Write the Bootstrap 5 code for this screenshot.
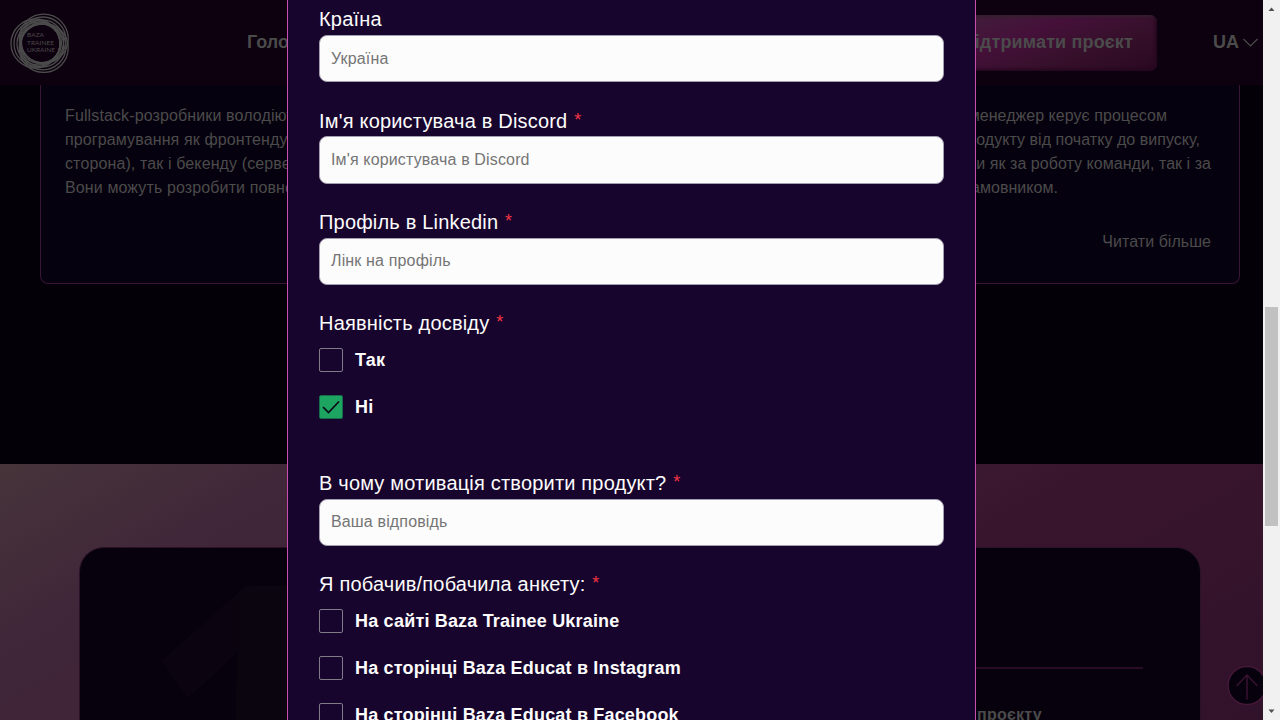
<!DOCTYPE html>
<html lang="uk">
<head>
<meta charset="utf-8">
<title>Baza Trainee Ukraine</title>
<link href="https://cdn.jsdelivr.net/npm/bootstrap@5.3.0/dist/css/bootstrap.min.css" rel="stylesheet">
<style>
body{font-family:"Liberation Sans",Arial,sans-serif;background:#030008;color:#4b4b4b}
.screen{height:720px;width:1280px}
.site{width:1263px}
.topbar{height:85px;background:#0d000f;font-size:18px;font-weight:700;padding:0 5px 0 10px}
.nav-first{margin-left:175px}
.donate{width:205px;height:56px;margin:0 56px 0 auto;border-radius:7px;padding-right:24px;font-size:18px;letter-spacing:.15px;background:linear-gradient(160deg,#40203a 0%,#45103a 35%,#36102b 65%,#2a0821 100%);box-shadow:inset -2px -2px 3px #250720,inset 0 2px 3px #35202f}
.roles{height:379px;padding:0 23px 0 40px}
.role{height:199px;width:389px;border:1px solid #3a1535;border-top:0;border-radius:0 0 8px 8px;background:#06010e;padding:19px 28px 0 24px;line-height:24px;white-space:nowrap;letter-spacing:.12px}
.ln1{margin-right:44px}.ln2{margin-right:11px}.ln3{margin-right:0}.ln4{margin-right:153px}
.role-end{letter-spacing:.04px}
.more{margin-top:30px}
.stages{height:256px;padding:84px 63px 0 80px;background:linear-gradient(150deg,#46343a 0%,#402639 20%,#402438 35%,#39152d 65%,#30122a 100%)}
.stage{height:172px;border-radius:24px 24px 0 0;background:#06010c;box-shadow:0 0 0 1px #2b1228}
.digit{font:700 370px/1 "Open Sans",sans-serif;width:300px;height:172px;transform:scaleY(1.11);transform-origin:0 39px;background:linear-gradient(90deg,#0b030f 0,#0b030f 145px,#0b050f 165px,#0b060f 100%);-webkit-background-clip:text;background-clip:text;color:transparent}
.digit span{display:block;margin-top:-26px;margin-left:59px}
.stage-side{width:300px;margin-right:57px}
.rule{height:2px;background:#280c24;margin-top:119px}
.stage-title{font-size:16px;font-weight:700;margin:34px 101px 0 0;text-align:right;line-height:24px;letter-spacing:.25px}
.to-top{left:1227px;top:665px;width:36px;height:40px}
.dialog-box{left:287px;top:-1px;width:689px;height:722px;border:1px solid #c94fae;background:#18052d;color:#fcfcfc;padding:7.3px 31px 0}
.q{font-size:20px;line-height:24px;height:27.7px;margin:0;white-space:pre;letter-spacing:.19px}
.q sup{color:#f13443;font-size:18px;line-height:0;vertical-align:2px;top:0;margin-left:1px}
.field{height:47.4px;border:1px solid #a59eb0;border-radius:8px;background:#fcfcfc;color:#212529;font-size:16px;letter-spacing:.15px;padding:0 11px;margin-bottom:26.2px;width:625px}
.field::placeholder{color:#757575}
.q-opts{margin-bottom:9.3px}
.q-gap{margin-top:52px}
.opt{height:24px;margin-bottom:22.8px;font-size:18px;font-weight:700;line-height:24px;gap:12px;letter-spacing:.18px}
.box{width:24px;height:24px;border:1px solid #817a89;border-radius:2px;flex:none}
.box.on{background:#1da461;border-color:#176b4d}
.sbar{width:17px;background:#f1f1f1}
.thumb{width:13px;height:219px;margin-top:307px;background:#c1c1c1}
.ar{left:0}
</style>
</head>
<body class="overflow-hidden">
<div class="screen d-flex position-relative overflow-hidden">
  <div class="site overflow-hidden">
    <header class="topbar d-flex align-items-center">
      <svg width="62" height="60" viewBox="0 0 62 60" fill="none" stroke="#4b4b4b" stroke-width="1.300">
        <circle cx="33.700" cy="25.700" r="24.500"/><circle cx="33" cy="27" r="23"/><circle cx="32.200" cy="28.300" r="21.500"/><circle cx="31.500" cy="29.600" r="20"/>
        <circle cx="25.500" cy="30.500" r="24.500"/><circle cx="27" cy="30.500" r="23"/><circle cx="28.500" cy="30.500" r="21.500"/><circle cx="30" cy="30.500" r="20"/>
        <circle cx="33.700" cy="34.900" r="24.500"/><circle cx="33" cy="33.800" r="23"/><circle cx="32.200" cy="32.600" r="21.500"/>
        <g fill="#4b4b4b" stroke="none" font-family="Lato,sans-serif" font-weight="400" font-size="6.500"><text x="17" y="24" textLength="17">BAZA</text><text x="17" y="31.700" textLength="27">TRAINEE</text><text x="17" y="39.300" textLength="28">UKRAINE</text></g>
      </svg>
      <span class="nav-first">Головна</span>
      <div class="donate d-flex align-items-center justify-content-end text-nowrap">Підтримати проєкт</div>
      <span>UA</span>
      <svg class="ms-1" width="15" height="9" viewBox="0 0 15 9" fill="none" stroke="#4b4b4b" stroke-width="1.200"><path d="M.5 1 7.500 8 14.500 1"/></svg>
    </header>
    <section class="roles d-flex justify-content-between">
      <div class="role">Fullstack-розробники володіють мовами<br>програмування як фронтенду (клієнтська<br>сторона), так і бекенду (серверна сторона).<br>Вони можуть розробити повноцінний продукт.</div>
      <div class="role role-end d-flex flex-column align-items-end">
        <span class="ln1">менеджер керує процесом</span><span class="ln2">створення продукту від початку до випуску,</span><span class="ln3">відповідаючи як за роботу команди, так і за</span><span class="ln4">спілкування із замовником.</span>
        <span class="more">Читати більше</span>
      </div>
    </section>
    <section class="stages">
      <div class="stage d-flex justify-content-between overflow-hidden">
        <div class="digit overflow-hidden"><span>1</span></div>
        <div class="stage-side"><div class="rule"></div><div class="stage-title">Ідея проєкту</div></div>
      </div>
    </section>
  </div>
  <div class="sbar position-relative d-flex justify-content-center">
    <svg class="ar position-absolute top-0" width="17" height="17"><path d="M5.500 11 8.500 7.500 11.500 11z" fill="#505050"/></svg>
    <div class="thumb"></div>
    <svg class="ar position-absolute bottom-0" width="17" height="17"><path d="M5.500 6.500 8.500 10 11.500 6.500z" fill="#505050"/></svg>
  </div>
  <svg class="to-top position-absolute" fill="none" stroke="#3a1232" stroke-width="1.500"><circle cx="20" cy="20.500" r="19" fill="#06010c" stroke="#451739" stroke-width="1.500"/><path d="M20 34.500V10M9.500 21 20 10 30.500 21"/></svg>
  <form class="dialog-box position-absolute">
    <label class="q d-block">Країна</label>
    <input class="field d-block" placeholder="Україна">
    <label class="q d-block">Ім'я користувача в Discord <sup>*</sup></label>
    <input class="field d-block" placeholder="Ім'я користувача в Discord">
    <label class="q d-block">Профіль в Linkedin <sup>*</sup></label>
    <input class="field d-block" placeholder="Лінк на профіль">
    <p class="q q-opts">Наявність досвіду <sup>*</sup></p>
    <div class="opt d-flex"><span class="box"></span>Так</div>
    <div class="opt d-flex"><span class="box on"><svg class="d-block" width="22" height="22" fill="none" stroke="#0d0818" stroke-width="1.700"><path d="M3 11 8.500 16.500 19 5.500"/></svg></span>Ні</div>
    <p class="q q-gap">В чому мотивація створити продукт? <sup>*</sup></p>
    <input class="field d-block" placeholder="Ваша відповідь">
    <p class="q q-opts">Я побачив/побачила анкету: <sup>*</sup></p>
    <div class="opt d-flex"><span class="box"></span>На сайті Baza Trainee Ukraine</div>
    <div class="opt d-flex"><span class="box"></span>На сторінці Baza Educat в Instagram</div>
    <div class="opt d-flex"><span class="box"></span>На сторінці Baza Educat в Facebook</div>
  </form>
</div>
<script src="https://cdn.jsdelivr.net/npm/bootstrap@5.3.0/dist/js/bootstrap.bundle.min.js"></script>
</body>
</html>
